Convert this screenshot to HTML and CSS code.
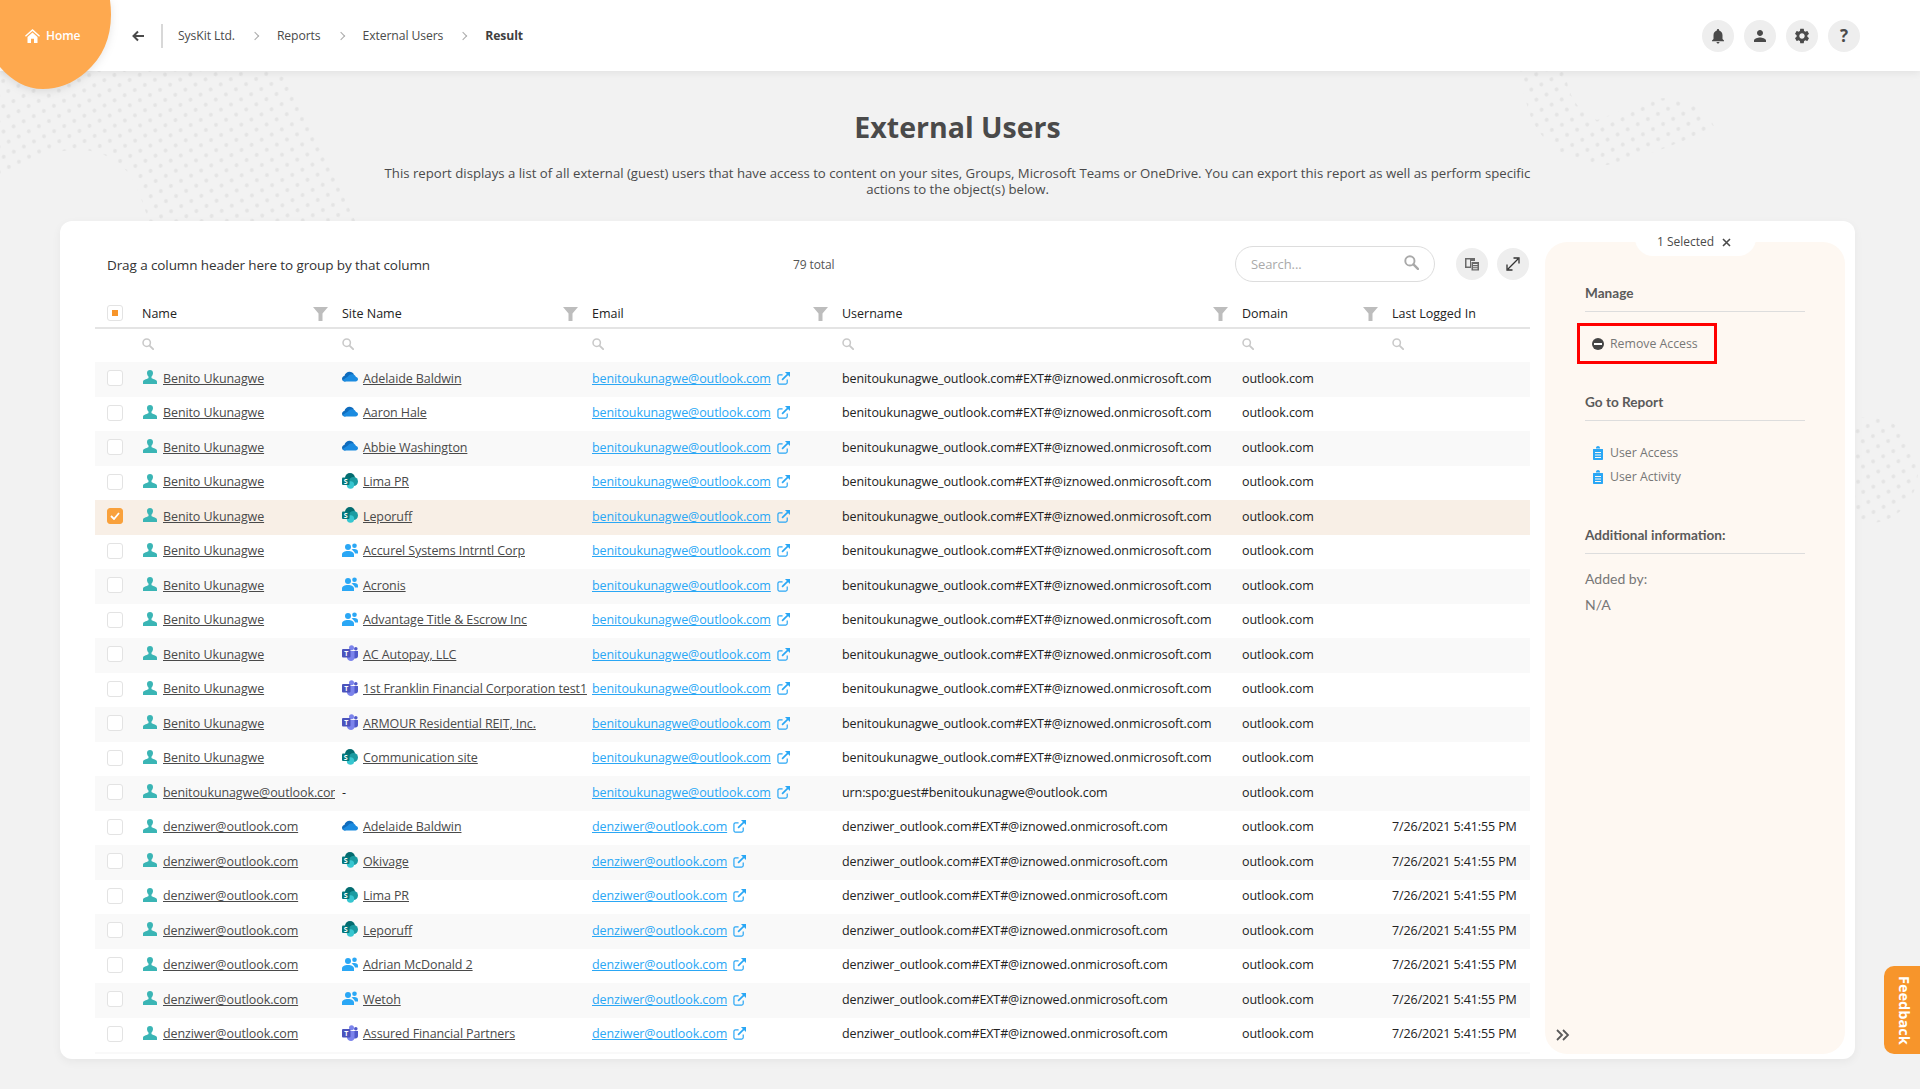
FILE: index.html
```html
<!DOCTYPE html>
<html lang="en">
<head>
<meta charset="utf-8">
<title>External Users</title>
<link rel="stylesheet" href="styles.css">
</head>
<body>
<svg class="defs" width="0" height="0">
  <defs>
    <pattern id="dots" width="16" height="16" patternUnits="userSpaceOnUse" patternTransform="rotate(18)">
      <circle cx="4" cy="4" r="1.9" fill="#e4e4e4"/>
      <circle cx="12" cy="12" r="1.9" fill="#e4e4e4"/>
    </pattern>
    <symbol id="i-person" viewBox="0 0 14 14"><path d="M7 0c1.900 0 3 1.300 3 3 0 1.500-.7 2.800-1.500 3.600v1.500c0 .8 5.500 1.400 5.500 3.600V14H0v-2.300c0-2.200 5.500-2.800 5.500-3.600V6.600C4.700 5.800 4 4.500 4 3c0-1.700 1.100-3 3-3z"/></symbol>
    <symbol id="i-cloud" viewBox="0 0 16 12">
      <path fill="#0f6cbd" d="M3 10.500C1.200 10.500 0 9.300 0 7.800c0-1.400 1-2.500 2.400-2.700C3 2.600 5.100.8 7.600.8c1.900 0 3.500 1 4.300 2.500L9 8z"/>
      <path fill="#1b8be0" d="M6 5.500c.8-1.400 2.300-2.300 4-2.300 1.900 0 3.500 1.200 4 2.900 1.200.1 2 1.100 2 2.200 0 1.200-1 2.200-2.300 2.200H3c-1 0-2-.6-2.400-1.500z"/>
    </symbol>
    <symbol id="i-sp" viewBox="0 0 16 16">
      <circle cx="8" cy="5" r="5" fill="#036c70"/>
      <circle cx="11.500" cy="8.500" r="4.500" fill="#1a9ba1"/>
      <circle cx="8.500" cy="12" r="3.700" fill="#37c6d0"/>
      <rect x="0" y="4.500" width="7.500" height="7.500" rx="1" fill="#03787c"/>
      <text x="3.750" y="10.500" class="sp-s">S</text>
    </symbol>
    <symbol id="i-group" viewBox="0 0 16 14"><circle cx="6" cy="4" r="3"/><circle cx="12.500" cy="2.700" r="2.300"/><path d="M0 14v-2.500C0 9.300 2.500 8 6 8s6 1.300 6 3.500V14zM9.500 6.500c1-.5 2-.6 3-.6 2 0 3.500 1 3.500 2.800v1.800h-3C12.500 8.800 11 7.300 9.500 6.500z"/></symbol>
    <symbol id="i-teams" viewBox="0 0 16 16">
      <circle cx="9.500" cy="2.700" r="2.500" fill="#7b83eb"/>
      <circle cx="13.800" cy="3.700" r="1.800" fill="#5059c9"/>
      <path fill="#5059c9" d="M11.500 6H16v5c0 1.500-1 2.500-2.500 2.500h-2z"/>
      <path fill="#7b83eb" d="M5 6h7.500v6.500c0 2-1.500 3.500-3.500 3.500s-4-1.500-4-3.500z"/>
      <rect x="0" y="4" width="8.500" height="8.500" rx="1" fill="#4b53bc"/>
      <text x="4.200" y="10.800" class="sp-s">T</text>
    </symbol>
    <symbol id="i-ext" viewBox="0 0 14 14"><path fill="none" stroke="currentColor" stroke-width="1.300" d="M11 8v3.400c0 1-.6 1.600-1.600 1.600H2.600c-1 0-1.600-.6-1.600-1.600V4.600C1 3.600 1.600 3 2.600 3H6"/><path fill="none" stroke="currentColor" stroke-width="1.800" d="M5.500 8.500 12 2"/><path d="M8.500 0H14v5.500z"/></symbol>
    <symbol id="i-funnel" viewBox="0 0 15 14"><path d="M0 0h15L9.500 6.500V14h-4V6.500z"/></symbol>
    <symbol id="i-search" viewBox="0 0 14 14"><circle cx="5.500" cy="5.500" r="4.300" fill="none" stroke="currentColor" stroke-width="1.800"/><path d="M8.800 8.800 13 13" stroke="currentColor" stroke-width="2.200" stroke-linecap="round"/></symbol>
    <symbol id="i-clip" viewBox="0 0 10 14"><path d="M3 2.500V2c0-1.100.9-2 2-2s2 .9 2 2v.5zM0 3.500C0 3 .4 3 1 3h8c.6 0 1 0 1 .5V13c0 .6-.4 1-1 1H1c-.6 0-1-.4-1-1zM2 6v1h6V6zm0 2.500v1h6v-1zM2 11v1h6v-1z" fill-rule="evenodd"/></symbol>
  </defs>
</svg>

<!-- background dots -->
<svg class="dots dots-left" width="380" height="160" viewBox="0 71 380 160"><path fill="url(#dots)" d="M0 71H282C292 95 308 125 322 150L360 231H152C142 200 135 175 118 163 98 148 70 145 40 158L0 177Z"/></svg>
<svg class="dots dots-top" width="210" height="110" viewBox="1510 71 210 110"><path fill="url(#dots)" d="M1517 71H1565C1568 90 1572 108 1597 120 1620 112 1645 98 1667 98 1690 98 1708 112 1715 128 1690 138 1640 160 1607 165 1570 168 1535 140 1527 105Z"/></svg>
<svg class="dots dots-right" width="80" height="110" viewBox="1845 415 80 110"><ellipse cx="1870" cy="470" rx="48" ry="53" fill="url(#dots)"/></svg>

<header class="topbar">
  <svg class="home-blob" width="116" height="90" viewBox="0 0 116 90"><path d="M0 0H110C114 30 106 55 86 72 72 84 58 89 43 89 26 89 12 81 0 67Z"/></svg>
  <a class="home-link">
    <svg width="15" height="14" viewBox="0 0 15 14"><path fill="#fff" d="M7.500 0 15 6.800l-.9 1L7.500 1.900.9 7.800 0 6.800zM2.500 8l5-4.500 5 4.500v6H9V9.800H6V14H2.500z"/></svg>
    Home
  </a>
  <svg class="back" width="12" height="12" viewBox="0 0 12 12"><path d="M12 6H2M6 1.500 1.500 6 6 10.500" fill="none" stroke="#4a4a4a" stroke-width="2"/></svg>
  <span class="divider"></span>
  <nav class="crumbs">
    <span>SysKit Ltd.</span><i></i><span>Reports</span><i></i><span>External Users</span><i></i><b>Result</b>
  </nav>
  <div class="top-actions">
    <span class="round"><svg width="18" height="18" viewBox="0 0 24 24"><path d="M12 22c1.100 0 2-.9 2-2h-4c0 1.100.9 2 2 2zm6-6v-5c0-3.070-1.630-5.640-4.500-6.320V4c0-.83-.67-1.500-1.500-1.500s-1.500.67-1.500 1.500v.68C7.640 5.360 6 7.920 6 11v5l-2 2v1h16v-1z"/></svg></span>
    <span class="round"><svg width="18" height="18" viewBox="0 0 24 24"><path d="M12 12c2.210 0 4-1.790 4-4s-1.790-4-4-4-4 1.790-4 4 1.790 4 4 4zm0 2c-2.670 0-8 1.340-8 4v2h16v-2c0-2.660-5.330-4-8-4z"/></svg></span>
    <span class="round"><svg width="18" height="18" viewBox="0 0 24 24"><path d="M19.140 12.940c.04-.3.06-.61.06-.94 0-.32-.02-.64-.07-.94l2.030-1.580c.18-.14.23-.41.12-.61l-1.920-3.320c-.12-.22-.37-.29-.59-.22l-2.390.96c-.5-.38-1.030-.7-1.620-.94l-.36-2.540c-.04-.24-.24-.41-.48-.41h-3.840c-.24 0-.43.17-.47.41l-.36 2.540c-.59.24-1.130.57-1.620.94l-2.390-.96c-.22-.08-.47 0-.59.22L2.740 8.870c-.12.21-.08.47.12.61l2.030 1.580c-.05.3-.09.63-.09.94s.02.64.07.94l-2.030 1.580c-.18.14-.23.41-.12.61l1.920 3.320c.12.22.37.29.59.22l2.390-.96c.5.38 1.030.7 1.620.94l.36 2.540c.05.24.24.41.48.41h3.840c.24 0 .44-.17.47-.41l.36-2.540c.59-.24 1.130-.56 1.620-.94l2.390.96c.22.08.47 0 .59-.22l1.920-3.320c.12-.22.07-.47-.12-.61zM12 15.600c-1.980 0-3.600-1.620-3.600-3.600s1.620-3.600 3.600-3.600 3.600 1.620 3.600 3.600-1.620 3.600-3.600 3.600z"/></svg></span>
    <span class="round help">?</span>
  </div>
</header>

<main class="page">
  <h1>External Users</h1>
  <p class="intro">This report displays a list of all external (guest) users that have access to content on your sites, Groups, Microsoft Teams or OneDrive. You can export this report as well as perform specific actions to the object(s) below.</p>

  <section class="card">
    <div class="report">
      <div class="toolbar">
        <span class="group-hint">Drag a column header here to group by that column</span>
        <span class="total">79 total</span>
        <div class="searchbox"><span>Search...</span><svg class="ic-search-lg"><use href="#i-search"/></svg></div>
        <span class="round small"><svg width="18" height="18" viewBox="0 0 18 18"><path d="M2 3h10v3H8v7H2zm1.500 1.500v7H7v-7z" fill-rule="evenodd" fill="#6a6a6a"/><path d="M8.500 7H16v8.500H8.500zM10 9v1h4.500V9zm0 2.200v1h4.500v-1zm0 2v1h4.500v-1z" fill-rule="evenodd" fill="#6a6a6a"/></svg></span>
        <span class="round small"><svg width="14" height="14" viewBox="0 0 14 14"><path d="M2 12 12 2M7.500 1H13v5.500M1 7.500V13h5.500" fill="none" stroke="#333" stroke-width="1.300"/></svg></span>
      </div>

      <div class="grid-row head">
        <div class="cell"><span class="check partial"></span></div>
        <div class="cell">Name<svg class="funnel"><use href="#i-funnel"/></svg></div>
        <div class="cell">Site Name<svg class="funnel"><use href="#i-funnel"/></svg></div>
        <div class="cell">Email<svg class="funnel"><use href="#i-funnel"/></svg></div>
        <div class="cell">Username<svg class="funnel"><use href="#i-funnel"/></svg></div>
        <div class="cell">Domain<svg class="funnel"><use href="#i-funnel"/></svg></div>
        <div class="cell">Last Logged In</div>
      </div>
      <div class="grid-row filters">
        <div class="cell"></div>
        <div class="cell"><svg class="ic-search"><use href="#i-search"/></svg></div>
        <div class="cell"><svg class="ic-search"><use href="#i-search"/></svg></div>
        <div class="cell"><svg class="ic-search"><use href="#i-search"/></svg></div>
        <div class="cell"><svg class="ic-search"><use href="#i-search"/></svg></div>
        <div class="cell"><svg class="ic-search"><use href="#i-search"/></svg></div>
        <div class="cell"><svg class="ic-search"><use href="#i-search"/></svg></div>
      </div>

      <div class="rows">
        <div class="grid-row"><div class="cell"><span class="check"></span></div><div class="cell"><svg class="person"><use href="#i-person"/></svg><a>Benito Ukunagwe</a></div><div class="cell"><svg class="site"><use href="#i-cloud"/></svg><a>Adelaide Baldwin</a></div><div class="cell"><a class="mail">benitoukunagwe@outlook.com</a><svg class="ext"><use href="#i-ext"/></svg></div><div class="cell">benitoukunagwe_outlook.com#EXT#@iznowed.onmicrosoft.com</div><div class="cell">outlook.com</div><div class="cell"></div></div>
        <div class="grid-row"><div class="cell"><span class="check"></span></div><div class="cell"><svg class="person"><use href="#i-person"/></svg><a>Benito Ukunagwe</a></div><div class="cell"><svg class="site"><use href="#i-cloud"/></svg><a>Aaron Hale</a></div><div class="cell"><a class="mail">benitoukunagwe@outlook.com</a><svg class="ext"><use href="#i-ext"/></svg></div><div class="cell">benitoukunagwe_outlook.com#EXT#@iznowed.onmicrosoft.com</div><div class="cell">outlook.com</div><div class="cell"></div></div>
        <div class="grid-row"><div class="cell"><span class="check"></span></div><div class="cell"><svg class="person"><use href="#i-person"/></svg><a>Benito Ukunagwe</a></div><div class="cell"><svg class="site"><use href="#i-cloud"/></svg><a>Abbie Washington</a></div><div class="cell"><a class="mail">benitoukunagwe@outlook.com</a><svg class="ext"><use href="#i-ext"/></svg></div><div class="cell">benitoukunagwe_outlook.com#EXT#@iznowed.onmicrosoft.com</div><div class="cell">outlook.com</div><div class="cell"></div></div>
        <div class="grid-row"><div class="cell"><span class="check"></span></div><div class="cell"><svg class="person"><use href="#i-person"/></svg><a>Benito Ukunagwe</a></div><div class="cell"><svg class="site"><use href="#i-sp"/></svg><a>Lima PR</a></div><div class="cell"><a class="mail">benitoukunagwe@outlook.com</a><svg class="ext"><use href="#i-ext"/></svg></div><div class="cell">benitoukunagwe_outlook.com#EXT#@iznowed.onmicrosoft.com</div><div class="cell">outlook.com</div><div class="cell"></div></div>
        <div class="grid-row selected"><div class="cell"><span class="check on"><svg width="10" height="8" viewBox="0 0 10 8"><path d="M1 4l3 3 5-6" fill="none" stroke="#fff" stroke-width="1.800"/></svg></span></div><div class="cell"><svg class="person"><use href="#i-person"/></svg><a>Benito Ukunagwe</a></div><div class="cell"><svg class="site"><use href="#i-sp"/></svg><a>Leporuff</a></div><div class="cell"><a class="mail">benitoukunagwe@outlook.com</a><svg class="ext"><use href="#i-ext"/></svg></div><div class="cell">benitoukunagwe_outlook.com#EXT#@iznowed.onmicrosoft.com</div><div class="cell">outlook.com</div><div class="cell"></div></div>
        <div class="grid-row"><div class="cell"><span class="check"></span></div><div class="cell"><svg class="person"><use href="#i-person"/></svg><a>Benito Ukunagwe</a></div><div class="cell"><svg class="site group"><use href="#i-group"/></svg><a>Accurel Systems Intrntl Corp</a></div><div class="cell"><a class="mail">benitoukunagwe@outlook.com</a><svg class="ext"><use href="#i-ext"/></svg></div><div class="cell">benitoukunagwe_outlook.com#EXT#@iznowed.onmicrosoft.com</div><div class="cell">outlook.com</div><div class="cell"></div></div>
        <div class="grid-row"><div class="cell"><span class="check"></span></div><div class="cell"><svg class="person"><use href="#i-person"/></svg><a>Benito Ukunagwe</a></div><div class="cell"><svg class="site group"><use href="#i-group"/></svg><a>Acronis</a></div><div class="cell"><a class="mail">benitoukunagwe@outlook.com</a><svg class="ext"><use href="#i-ext"/></svg></div><div class="cell">benitoukunagwe_outlook.com#EXT#@iznowed.onmicrosoft.com</div><div class="cell">outlook.com</div><div class="cell"></div></div>
        <div class="grid-row"><div class="cell"><span class="check"></span></div><div class="cell"><svg class="person"><use href="#i-person"/></svg><a>Benito Ukunagwe</a></div><div class="cell"><svg class="site group"><use href="#i-group"/></svg><a>Advantage Title &amp; Escrow Inc</a></div><div class="cell"><a class="mail">benitoukunagwe@outlook.com</a><svg class="ext"><use href="#i-ext"/></svg></div><div class="cell">benitoukunagwe_outlook.com#EXT#@iznowed.onmicrosoft.com</div><div class="cell">outlook.com</div><div class="cell"></div></div>
        <div class="grid-row"><div class="cell"><span class="check"></span></div><div class="cell"><svg class="person"><use href="#i-person"/></svg><a>Benito Ukunagwe</a></div><div class="cell"><svg class="site"><use href="#i-teams"/></svg><a>AC Autopay, LLC</a></div><div class="cell"><a class="mail">benitoukunagwe@outlook.com</a><svg class="ext"><use href="#i-ext"/></svg></div><div class="cell">benitoukunagwe_outlook.com#EXT#@iznowed.onmicrosoft.com</div><div class="cell">outlook.com</div><div class="cell"></div></div>
        <div class="grid-row"><div class="cell"><span class="check"></span></div><div class="cell"><svg class="person"><use href="#i-person"/></svg><a>Benito Ukunagwe</a></div><div class="cell"><svg class="site"><use href="#i-teams"/></svg><a>1st Franklin Financial Corporation test1</a></div><div class="cell"><a class="mail">benitoukunagwe@outlook.com</a><svg class="ext"><use href="#i-ext"/></svg></div><div class="cell">benitoukunagwe_outlook.com#EXT#@iznowed.onmicrosoft.com</div><div class="cell">outlook.com</div><div class="cell"></div></div>
        <div class="grid-row"><div class="cell"><span class="check"></span></div><div class="cell"><svg class="person"><use href="#i-person"/></svg><a>Benito Ukunagwe</a></div><div class="cell"><svg class="site"><use href="#i-teams"/></svg><a>ARMOUR Residential REIT, Inc.</a></div><div class="cell"><a class="mail">benitoukunagwe@outlook.com</a><svg class="ext"><use href="#i-ext"/></svg></div><div class="cell">benitoukunagwe_outlook.com#EXT#@iznowed.onmicrosoft.com</div><div class="cell">outlook.com</div><div class="cell"></div></div>
        <div class="grid-row"><div class="cell"><span class="check"></span></div><div class="cell"><svg class="person"><use href="#i-person"/></svg><a>Benito Ukunagwe</a></div><div class="cell"><svg class="site"><use href="#i-sp"/></svg><a>Communication site</a></div><div class="cell"><a class="mail">benitoukunagwe@outlook.com</a><svg class="ext"><use href="#i-ext"/></svg></div><div class="cell">benitoukunagwe_outlook.com#EXT#@iznowed.onmicrosoft.com</div><div class="cell">outlook.com</div><div class="cell"></div></div>
        <div class="grid-row"><div class="cell"><span class="check"></span></div><div class="cell"><svg class="person"><use href="#i-person"/></svg><a class="clip">benitoukunagwe@outlook.com</a></div><div class="cell">-</div><div class="cell"><a class="mail">benitoukunagwe@outlook.com</a><svg class="ext"><use href="#i-ext"/></svg></div><div class="cell">urn:spo:guest#benitoukunagwe@outlook.com</div><div class="cell">outlook.com</div><div class="cell"></div></div>
        <div class="grid-row"><div class="cell"><span class="check"></span></div><div class="cell"><svg class="person"><use href="#i-person"/></svg><a>denziwer@outlook.com</a></div><div class="cell"><svg class="site"><use href="#i-cloud"/></svg><a>Adelaide Baldwin</a></div><div class="cell"><a class="mail">denziwer@outlook.com</a><svg class="ext"><use href="#i-ext"/></svg></div><div class="cell">denziwer_outlook.com#EXT#@iznowed.onmicrosoft.com</div><div class="cell">outlook.com</div><div class="cell">7/26/2021 5:41:55 PM</div></div>
        <div class="grid-row"><div class="cell"><span class="check"></span></div><div class="cell"><svg class="person"><use href="#i-person"/></svg><a>denziwer@outlook.com</a></div><div class="cell"><svg class="site"><use href="#i-sp"/></svg><a>Okivage</a></div><div class="cell"><a class="mail">denziwer@outlook.com</a><svg class="ext"><use href="#i-ext"/></svg></div><div class="cell">denziwer_outlook.com#EXT#@iznowed.onmicrosoft.com</div><div class="cell">outlook.com</div><div class="cell">7/26/2021 5:41:55 PM</div></div>
        <div class="grid-row"><div class="cell"><span class="check"></span></div><div class="cell"><svg class="person"><use href="#i-person"/></svg><a>denziwer@outlook.com</a></div><div class="cell"><svg class="site"><use href="#i-sp"/></svg><a>Lima PR</a></div><div class="cell"><a class="mail">denziwer@outlook.com</a><svg class="ext"><use href="#i-ext"/></svg></div><div class="cell">denziwer_outlook.com#EXT#@iznowed.onmicrosoft.com</div><div class="cell">outlook.com</div><div class="cell">7/26/2021 5:41:55 PM</div></div>
        <div class="grid-row"><div class="cell"><span class="check"></span></div><div class="cell"><svg class="person"><use href="#i-person"/></svg><a>denziwer@outlook.com</a></div><div class="cell"><svg class="site"><use href="#i-sp"/></svg><a>Leporuff</a></div><div class="cell"><a class="mail">denziwer@outlook.com</a><svg class="ext"><use href="#i-ext"/></svg></div><div class="cell">denziwer_outlook.com#EXT#@iznowed.onmicrosoft.com</div><div class="cell">outlook.com</div><div class="cell">7/26/2021 5:41:55 PM</div></div>
        <div class="grid-row"><div class="cell"><span class="check"></span></div><div class="cell"><svg class="person"><use href="#i-person"/></svg><a>denziwer@outlook.com</a></div><div class="cell"><svg class="site group"><use href="#i-group"/></svg><a>Adrian McDonald 2</a></div><div class="cell"><a class="mail">denziwer@outlook.com</a><svg class="ext"><use href="#i-ext"/></svg></div><div class="cell">denziwer_outlook.com#EXT#@iznowed.onmicrosoft.com</div><div class="cell">outlook.com</div><div class="cell">7/26/2021 5:41:55 PM</div></div>
        <div class="grid-row"><div class="cell"><span class="check"></span></div><div class="cell"><svg class="person"><use href="#i-person"/></svg><a>denziwer@outlook.com</a></div><div class="cell"><svg class="site group"><use href="#i-group"/></svg><a>Wetoh</a></div><div class="cell"><a class="mail">denziwer@outlook.com</a><svg class="ext"><use href="#i-ext"/></svg></div><div class="cell">denziwer_outlook.com#EXT#@iznowed.onmicrosoft.com</div><div class="cell">outlook.com</div><div class="cell">7/26/2021 5:41:55 PM</div></div>
        <div class="grid-row"><div class="cell"><span class="check"></span></div><div class="cell"><svg class="person"><use href="#i-person"/></svg><a>denziwer@outlook.com</a></div><div class="cell"><svg class="site"><use href="#i-teams"/></svg><a>Assured Financial Partners</a></div><div class="cell"><a class="mail">denziwer@outlook.com</a><svg class="ext"><use href="#i-ext"/></svg></div><div class="cell">denziwer_outlook.com#EXT#@iznowed.onmicrosoft.com</div><div class="cell">outlook.com</div><div class="cell">7/26/2021 5:41:55 PM</div></div>
        <div class="grid-row"></div>
      </div>
    </div>

    <aside class="side">
      <div class="side-tab">1 Selected <svg width="9" height="9" viewBox="0 0 9 9"><path d="M1 1l7 7M8 1 1 8" stroke="#4a4a4a" stroke-width="1.600"/></svg></div>
      <h3 class="side-first">Manage</h3>
      <a class="action boxed"><span class="minus"></span>Remove Access</a>
      <h3 class="side-report">Go to Report</h3>
      <ul class="side-links">
        <li><svg class="clip-ic"><use href="#i-clip"/></svg>User Access</li>
        <li><svg class="clip-ic"><use href="#i-clip"/></svg>User Activity</li>
      </ul>
      <h3 class="side-info">Additional information:</h3>
      <p class="meta">Added by:</p>
      <p class="meta">N/A</p>
      <svg class="collapse" width="14" height="12" viewBox="0 0 14 12"><path d="M1 1l5 5-5 5M7 1l5 5-5 5" fill="none" stroke="#5a5a5a" stroke-width="1.800"/></svg>
    </aside>
  </section>
</main>

<div class="feedback">Feedback</div>
</body>
</html>
```

FILE: styles.css
```css
html, body {margin:0;height:1089px;overflow:hidden;}
body {background:#f2f2f2;font-family:"Open Sans","Liberation Sans",sans-serif;font-size:12.5px;letter-spacing:-.1px;color:#4a4a4a;position:relative;}
.defs {position:absolute;}
.sp-s {font-family:"Open Sans",sans-serif;font-size:7px;font-weight:700;fill:#fff;text-anchor:middle;}

/*====================Background dots=====================*/
.dots {position:absolute;}
.dots-left {left:0;top:71px;}
.dots-top {left:1510px;top:71px;}
.dots-right {left:1845px;top:415px;}

/*====================Top bar=====================*/
.topbar {height:71px;background:#fff;box-shadow:0 2px 8px rgba(0,0,0,.07);display:flex;align-items:center;position:relative;padding-right:60px;}
.home-blob {position:absolute;left:0;top:0;z-index:2;filter:drop-shadow(0 2px 4px rgba(0,0,0,.1));}
.home-blob path {fill:#fea94f;}
.home-link {position:relative;z-index:3;margin-left:25px;width:107px;display:flex;align-items:center;gap:6px;color:#fff;font-size:12px;font-weight:600;}
.back {display:block;}
.divider {width:2px;height:24px;background:#d8d8d8;margin:0 15px 0 17px;}
.crumbs {display:flex;align-items:center;font-size:12.2px;color:#4a4a4a;}
.crumbs i {width:5px;height:5px;border-top:1px solid #aaa;border-right:1px solid #aaa;transform:rotate(45deg);margin:0 19px 0 17px;}
.crumbs b {font-weight:700;color:#3f3f3f;}
.top-actions {margin-left:auto;display:flex;gap:10px;}
.round {width:32px;height:32px;border-radius:50%;background:#eee;display:flex;align-items:center;justify-content:center;fill:#4a4a4a;}
.help {font-size:17px;font-weight:700;color:#4a4a4a;}

/*====================Page=====================*/
.page {position:relative;padding:0 65px 0 60px;}
h1 {margin:37px 0 0;text-align:center;font-size:28.5px;line-height:38px;font-weight:700;letter-spacing:0;color:#4a4a4a;}
.intro {width:1152px;margin:19px auto 0;text-align:center;font-size:13.2px;letter-spacing:0;line-height:16px;color:#4a4a4a;}
.card {margin-top:24px;height:838px;box-sizing:border-box;background:#fff;border-radius:12px;box-shadow:0 3px 10px rgba(0,0,0,.05);display:flex;gap:15px;padding:21px 10px 5px 35px;}

/*====================Report grid=====================*/
.report {width:1435px;flex:none;}
.toolbar {height:56px;display:flex;align-items:flex-start;position:relative;}
.group-hint {margin:14px 0 0 12px;width:686px;font-size:13.5px;color:#333;line-height:18px;}
.total {margin-top:15px;font-size:12px;line-height:16px;color:#555;width:442px;}
.searchbox {margin-top:4px;width:200px;height:36px;box-sizing:border-box;border:1px solid #ddd;border-radius:18px;background:#fff;padding:0 15px;display:flex;align-items:center;justify-content:space-between;color:#aaa;font-size:13px;}
.ic-search-lg {width:15px;height:15px;color:#a9a9a9;margin-top:-3px;}
.round.small {margin-top:6px;margin-left:9px;}
.toolbar .searchbox + .round.small {margin-left:21px;}
.grid-row {display:grid;grid-template-columns:42px 200px 250px 250px 400px 150px 143px;height:34.5px;}
.cell {display:flex;align-items:center;padding-left:5px;padding-bottom:2px;box-sizing:border-box;min-width:0;white-space:nowrap;overflow:hidden;position:relative;color:#222;}
.grid-row .cell:first-child {padding-left:12px;}
.head {height:31px;border-bottom:2px solid #e4e4e4;box-sizing:border-box;}
.head .cell {color:#222;padding-bottom:0;padding-top:1px;letter-spacing:0;}
.filters {height:33px;}
.filters .cell {padding-bottom:4px;}
.funnel {position:absolute;right:9px;top:9px;width:15px;height:14px;fill:#bdbdbd;}
.ic-search {width:12px;height:12px;color:#c9c9c9;}
.rows {height:692px;overflow:hidden;}
.rows .grid-row:nth-child(odd) {background:#f9f9f9;}
.rows .grid-row.selected {background:#f8efe6;}
.check {width:14px;height:14px;border:1px solid #e3e3e3;border-radius:3px;background:#fff;display:flex;align-items:center;justify-content:center;}
.check.partial::before {content:"";width:6px;height:6px;background:#f7952b;}
.check.on {background:#f9a13c;border-color:#f9a13c;}
.person {width:14px;height:14px;fill:#3ab5b5;flex:none;margin:-2px 6px 0 1px;}
.cell a {color:#4a4a4a;text-decoration:underline;}
.cell a.clip {overflow:hidden;max-width:172px;}
.site {width:16px;height:16px;flex:none;margin:-2px 5px 0 0;}
.site.group {fill:#2aa7f5;}
.cell a.mail {color:#2aa7f5;}
.ext {width:13px;height:13px;flex:none;margin-left:6px;color:#2aa7f5;fill:#2aa7f5;}

/*====================Side panel=====================*/
.side {width:300px;flex:none;box-sizing:border-box;position:relative;background:#fef8f2;border-radius:22px;padding:0 40px;color:#777;letter-spacing:0;}
.side-tab {position:absolute;left:90px;top:-21px;width:121px;height:35px;box-sizing:border-box;background:#fff;border-radius:0 0 18px 18px;padding:13px 0 0 22px;font-size:12px;line-height:16px;color:#4a4a4a;display:flex;gap:8px;}
.side-tab svg {margin-top:4px;}
.side h3 {margin:0;font-family:Lato,"Open Sans",sans-serif;font-size:13.6px;font-weight:700;line-height:18px;color:#5a5a5a;border-bottom:1px solid #ddd;padding-bottom:9px;}
.side-first {padding-top:42px;}
.action {display:flex;align-items:center;font-size:12.3px;color:#777;}
.boxed {margin:11px 0 0 -8px;width:140px;height:41px;box-sizing:border-box;border:3px solid #f00;padding-left:12px;}
.minus {width:12px;height:12px;border-radius:50%;background:#444;margin-right:6px;position:relative;flex:none;}
.minus::after {content:"";position:absolute;left:2px;right:2px;top:5px;height:2px;background:#fff;}
.side .side-report {margin-top:29px;}
.side-links {list-style:none;margin:20px 0 0;padding:0 0 0 8px;font-size:12.3px;line-height:24px;}
.side-links li {display:flex;align-items:center;}
.clip-ic {width:10px;height:14px;fill:#2aa7f5;margin-right:7px;}
.side .side-info {margin-top:37px;}
.meta {margin:0;font-family:Lato,"Open Sans",sans-serif;font-size:14px;line-height:18px;color:#777;}
.meta:first-of-type {margin-top:16px;margin-bottom:8px;}
.collapse {position:absolute;left:11px;bottom:13px;}

.feedback {position:absolute;left:1884px;top:966px;width:36px;height:88px;background:#f7952b;border-radius:10px 0 0 10px;color:#fff;font-size:14.5px;font-weight:700;letter-spacing:0;writing-mode:vertical-rl;display:flex;align-items:center;justify-content:center;box-sizing:border-box;padding-left:4px;}
```
